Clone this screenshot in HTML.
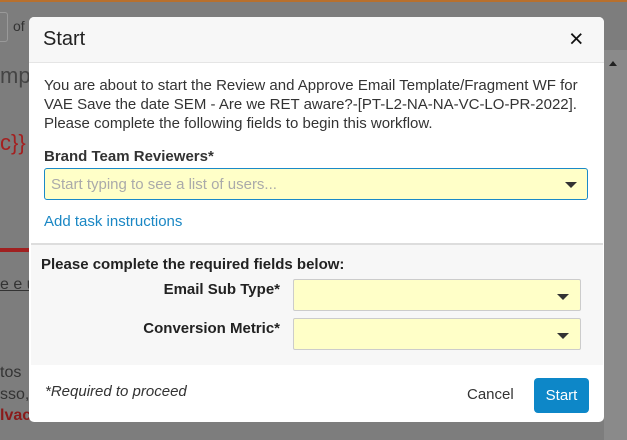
<!DOCTYPE html>
<html><head><style>
body{margin:0;width:627px;height:440px;overflow:hidden;background:#7d7d7d;font-family:"Liberation Sans",Arial,sans-serif;position:relative}
.ab{position:absolute}
.m{position:absolute;left:29px;top:17px;width:575px;height:405px;background:#fff;border-radius:5px;overflow:hidden}
.hd{height:45px;background:#f7f7f7;border-bottom:1px solid #e5e5e5;position:relative}
.dd{position:absolute;width:0;height:0;border-left:6px solid transparent;border-right:6px solid transparent;border-top:6px solid #333}
.lab{position:absolute;font-weight:bold;font-size:15px;color:#222;text-align:right;white-space:nowrap}
.sel{position:absolute;left:262px;width:286px;height:30px;background:#ffffc8;border:1px solid #ccc;border-radius:2px}
</style></head><body>
<div class="ab" style="left:0;top:0;width:627px;height:2px;background:#b8702e"></div>
<div class="ab" style="left:-4px;top:12px;width:10px;height:28px;border:1px solid #999;border-radius:3px"></div>
<div class="ab" style="left:13px;top:18px;font-size:14px;color:#333">of</div>
<div class="ab" style="left:0;top:63px;font-size:22px;color:#444">mp</div>
<div class="ab" style="left:0;top:130px;font-size:22px;color:#a42020">c}}</div>
<div class="ab" style="left:0;top:248px;width:29px;height:4px;background:#a02020"></div>
<div class="ab" style="left:0;top:276px;font-size:16px;color:#333;text-decoration:underline">e e u</div>
<div class="ab" style="left:0;top:364px;font-size:16px;color:#333">tos</div>
<div class="ab" style="left:0;top:386px;font-size:16px;color:#333">sso,</div>
<div class="ab" style="left:0;top:407px;font-size:16px;color:#8a1a1a;font-weight:bold">lvac</div>
<div class="ab" style="left:604px;top:50px;width:23px;height:390px;background:#8a8a8a"></div>
<div class="ab" style="left:609px;top:61px;width:0;height:0;border-left:4px solid transparent;border-right:4px solid transparent;border-bottom:5px solid #222"></div>
<div class="m">
 <div class="hd">
  <div class="ab" style="left:14px;top:11px;font-size:20px;color:#222">Start</div>
  <div class="ab" style="left:540px;top:8px;font-size:25px;color:#111;line-height:28px">×</div>
 </div>
 <div class="ab" style="left:15px;top:59px;width:552px;font-size:15px;line-height:19px;color:#333">You are about to start the Review and Approve Email Template/Fragment WF for VAE Save the date SEM - Are we RET aware?-[PT-L2-NA-NA-VC-LO-PR-2022]. Please complete the following fields to begin this workflow.</div>
 <div class="ab" style="left:15px;top:131px;font-size:15px;font-weight:bold;color:#333">Brand Team Reviewers*</div>
 <div class="ab" style="left:15px;top:151px;width:542px;height:30px;background:#ffffc8;border:1px solid #1a8ac8;border-radius:3px">
  <div class="ab" style="left:6px;top:7px;font-size:15px;color:#aaa">Start typing to see a list of users...</div>
  <div class="dd" style="left:520px;top:13px"></div>
 </div>
 <div class="ab" style="left:15px;top:196px;font-size:15px;color:#1a87c4">Add task instructions</div>
 <div class="ab" style="left:2px;top:226px;width:572px;height:120px;background:#f7f7f7;border-top:2px solid #ddd">
  <div class="ab" style="left:10px;top:11px;font-size:15px;font-weight:bold;color:#222">Please complete the required fields below:</div>
  <div class="lab" style="right:323px;top:36px">Email Sub Type*</div>
  <div class="lab" style="right:323px;top:75px">Conversion Metric*</div>
  <div class="sel" style="top:34px"><div class="dd" style="left:263px;top:14px"></div></div>
  <div class="sel" style="top:73px"><div class="dd" style="left:263px;top:14px"></div></div>
 </div>
 <div class="ab" style="left:16px;top:366px;font-size:15px;font-style:italic;color:#333">*Required to proceed</div>
 <div class="ab" style="left:438px;top:369px;font-size:15px;color:#333">Cancel</div>
 <div class="ab" style="left:505px;top:361px;width:55px;height:35px;background:#0d87c8;border-radius:4px;color:#fff;font-size:15px;line-height:35px;text-align:center">Start</div>
</div>
</body></html>
